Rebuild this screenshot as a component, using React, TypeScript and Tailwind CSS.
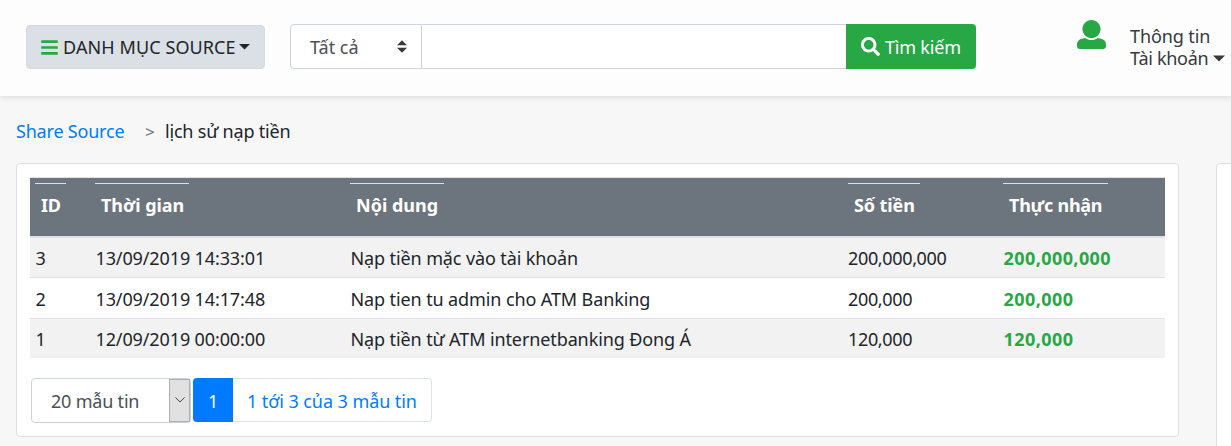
import { FaBars, FaSearch } from 'react-icons/fa';

interface Deposit {
  id: number;
  time: string;
  content: string;
  amount: string;
  received: string;
}

const DEPOSITS: Deposit[] = [
  {
    id: 3,
    time: '13/09/2019 14:33:01',
    content: 'Nạp tiền mặc vào tài khoản',
    amount: '200,000,000',
    received: '200,000,000',
  },
  {
    id: 2,
    time: '13/09/2019 14:17:48',
    content: 'Nap tien tu admin cho ATM Banking',
    amount: '200,000',
    received: '200,000',
  },
  {
    id: 1,
    time: '12/09/2019 00:00:00',
    content: 'Nạp tiền từ ATM internetbanking Đong Á',
    amount: '120,000',
    received: '120,000',
  },
];

const COLUMNS = [
  { label: 'ID', col: 'w-[60px]', line: 'w-[31px] tracking-[-0.3px]' },
  { label: 'Thời gian', col: 'w-[255px]', line: 'w-[94px] tracking-[-0.05px]' },
  { label: 'Nội dung', col: 'w-[498px]', line: 'w-[94px]' },
  { label: 'Số tiền', col: 'w-[155px]', line: 'w-[72px] tracking-[-0.1px]' },
  { label: 'Thực nhận', col: 'w-[167px]', line: 'w-[105px] tracking-[-0.25px]' },
];

function UserIcon() {
  return (
    <svg viewBox="0 0 512 512" className="w-[29px] h-[29px] mt-5 ml-[101px] shrink-0 fill-[#28a745]">
      <path d="M256 0c88.366 0 160 71.634 160 160s-71.634 160-160 160S96 248.366 96 160 167.634 0 256 0zm183.283 333.821l-71.313-17.828c-74.923 53.89-165.738 41.864-225.94 0l-71.313 17.828C29.981 344.505 0 382.903 0 426.955V464c0 26.51 21.49 48 48 48h416c26.51 0 48-21.49 48-48v-37.045c0-44.052-29.981-82.45-72.717-93.134z" />
    </svg>
  );
}

function Caret({ className }: { className: string }) {
  return (
    <svg viewBox="0 0 12 6" className={`shrink-0 fill-current ${className}`}>
      <path d="M0 0h12L6 6z" />
    </svg>
  );
}

function Header() {
  return (
    <header className="h-24 flex items-start bg-[#fdfdfd] shadow-[0_2px_5px_rgba(0,0,0,0.1)] relative">
      <button className="mt-[25px] ml-[26px] w-[239px] h-11 shrink-0 flex items-center pl-[13px] rounded border border-[#d3d9df] bg-[#dae0e5]">
        <FaBars className="size-[19px] shrink-0 text-[#28a745]" />
        <span className="ml-1 w-[173px] text-left tracking-[0.1px] whitespace-nowrap">DANH MỤC SOURCE</span>
        <Caret className="ml-[3px] w-[11px] h-[5.5px]" />
      </button>

      <div className="mt-6 ml-[25px] h-[45px] flex shrink-0">
        <button className="w-[132px] flex items-center rounded-l border border-[#ced4da] bg-white pl-[19px] text-[#495057]">
          <span className="w-[50px] pt-px text-left whitespace-nowrap">Tất cả</span>
          <svg viewBox="0 0 4 5" className="w-[10px] h-[13px] ml-[37px] fill-[#343a40]">
            <path d="M2 0L0 2h4zm0 5L0 3h4z" />
          </svg>
        </button>
        <input className="w-[424px] border-y border-[#ced4da] bg-white outline-none" />
        <button className="w-[130px] flex items-center rounded-r bg-[#28a745] pl-[15px] text-white">
          <FaSearch className="size-[19px] shrink-0" />
          <span className="ml-[5px] pt-px tracking-[-0.2px]">Tìm kiếm</span>
        </button>
      </div>

      <UserIcon />
      <div className="mt-[25px] ml-[24px] text-[#343a40] leading-[22px] whitespace-nowrap">
        <div className="tracking-[-0.1px]">Thông tin</div>
        <div className="flex items-center tracking-[-0.3px]">
          <span className="w-[79px]">Tài khoản</span>
          <Caret className="ml-1 w-3 h-[7px]" />
        </div>
      </div>
    </header>
  );
}

function DepositTable() {
  return (
    <table className="w-[1135px] table-fixed border-collapse text-left">
      <thead>
        <tr className="h-[59px] border-t border-b-2 border-[#dee2e6] bg-[#6c757d] text-white">
          {COLUMNS.map((c) => (
            <th key={c.label} className={`${c.col} p-0 pl-[5px] pt-[5px] align-top font-bold`}>
              <div className={`${c.line} h-[43px] flex items-center border-t border-[#dee2e6] pl-1.5 whitespace-nowrap`}>
                {c.label}
              </div>
            </th>
          ))}
        </tr>
      </thead>
      <tbody>
        {DEPOSITS.map((d) => (
          <tr key={d.id} className="h-[41px] last:h-[39px] border-b border-[#dee2e6] last:border-b-0 odd:bg-[#f2f2f2]">
            <td className="p-0 pt-0.5 pl-[5.5px]">{d.id}</td>
            <td className="p-0 pt-0.5 pl-[5.5px] tracking-[-0.12px]">{d.time}</td>
            <td className="p-0 pt-0.5 pl-[5.5px] tracking-[-0.11px] whitespace-nowrap">{d.content}</td>
            <td className="p-0 pt-0.5 pl-[5px] tracking-[-0.35px]">{d.amount}</td>
            <td className="p-0 pt-0.5 pl-[5.5px] tracking-[0.42px] font-bold text-[#28a745]">{d.received}</td>
          </tr>
        ))}
      </tbody>
    </table>
  );
}

function Pagination() {
  return (
    <div className="mt-5 ml-px flex items-start tracking-[-0.07px]">
      <button className="w-[160px] h-[45px] flex rounded border border-[#ced4da] text-[#495057]">
        <span className="flex-1 self-center pt-0.5 pl-[19px] text-left tracking-[-0.2px] whitespace-nowrap">20 mẫu tin</span>
        <span className="w-[21px] self-stretch flex items-center justify-center border border-[#adadad] bg-[#e1e1e1]">
          <svg viewBox="0 0 10 6" className="w-[10px] h-[6px] fill-none stroke-[#444]">
            <path d="M.5.5L5 5 9.500.5" />
          </svg>
        </span>
      </button>
      <span className="ml-[2px] w-10 h-11 pt-[3px] flex items-center justify-center rounded-l bg-[#007bff] text-white">1</span>
      <span className="w-[199px] h-11 pt-[3px] flex items-center rounded-r border border-l-0 border-[#dee2e6] pl-[14px] text-[#007bff] whitespace-nowrap">
        1 tới 3 của 3 mẫu tin
      </span>
    </div>
  );
}

export default function App() {
  return (
    <div className="w-[1231px] h-[446px] overflow-hidden bg-[#f7f7f7] font-['Noto_Sans','Open_Sans',sans-serif] text-[18px] leading-[27px] text-[#212529]">
      <Header />
      <nav className="mt-[22px] ml-4 flex items-center tracking-[-0.2px] whitespace-nowrap">
        <a className="w-[108px] text-[#007bff]">Share Source</a>
        <span className="ml-[21px] w-5 text-[17px] text-[#6c757d]">&gt;</span>
        <span>lịch sử nạp tiền</span>
      </nav>
      <div className="mt-[18px] ml-4 flex gap-[37px]">
        <main className="w-[1163px] h-[274px] shrink-0 rounded border border-[#dfdfdf] bg-white pt-[13px] pl-[13px]">
          <DepositTable />
          <Pagination />
        </main>
        <aside className="w-[300px] h-[400px] shrink-0 rounded border border-[#dfdfdf] bg-white" />
      </div>
    </div>
  );
}
